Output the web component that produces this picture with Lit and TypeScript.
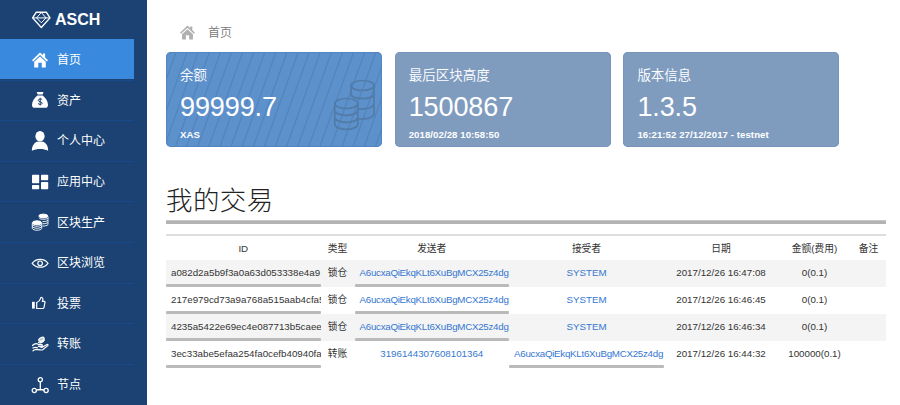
import { LitElement, html, svg, css } from "lit";
import { customElement, property } from "lit/decorators.js";
import { classMap } from "lit/directives/class-map.js";

const icons: Record<string, unknown> = {
  home: svg`<path fill="currentColor" d="M0 8.2 8 .6l2.8 2.6V1.5h2.3v3.9L16 8.2l-1.200 1.200L8 3 1.200 9.400z"/><path fill="currentColor" d="M2.200 9.800 8 4.400l5.800 5.400V15.500H9.800v-4.700H6.300v4.700H2.200z"/>`,
  money: svg`<path fill="currentColor" d="M4.700 0h6.800l-.9 2.500H5.700zM5.400 3.600h5.300c3 2.300 5.300 6 5.300 9.100 0 2-.8 3.100-2.500 3.100h-11C.8 15.800 0 14.700 0 12.700c0-3.100 2.400-6.800 5.400-9.100z"/><path d="M10.200 7.700C9.700 6.800 6.300 6.600 6.200 8.300c-.1 1.800 4.100 1.100 4 2.900-.1 1.600-3.600 1.500-4.200.2M8.200 5.800v7.700" fill="none" stroke="#1b4272" stroke-width="1"/>`,
  person: svg`<ellipse cx="8" cy="3.200" rx="4.600" ry="5.200" fill="currentColor"/><path fill="currentColor" d="M4.500 8.700h7c2.800 1.500 4.700 4.400 4.700 9-5-2.200-11.200-2.200-16.400 0C-.2 13.500 1.700 10.200 4.500 8.700z"/>`,
  apps: svg`<rect x="0" y=".7" width="7.200" height="8.500" rx=".7" fill="currentColor"/><rect x="9" y=".7" width="7.200" height="5.500" rx=".7" fill="currentColor"/><rect x="0" y="11" width="7.200" height="4.200" rx=".7" fill="currentColor"/><rect x="9" y="8" width="7.200" height="7.200" rx=".7" fill="currentColor"/>`,
  coins: svg`<g fill="none" stroke="currentColor" stroke-width=".9"><ellipse cx="11.300" cy="2" rx="4.500" ry="1.900" fill="currentColor"/><path d="M7 3.800c1 2 8 2 9 0M10.500 7.500c2 .3 5-.2 5.500-1.500M10.500 9.700c2 .2 5-.3 5.500-1.500M10.500 12c2 .2 5-.3 5.500-1.500M16 2.500v8"/><ellipse cx="5" cy="8.800" rx="4.600" ry="2" fill="currentColor"/><path d="M.3 10.500c.8 2.300 8.600 2.300 9.400 0M.3 12.500c.8 2.300 8.600 2.300 9.400 0M.3 14.500c.8 2.300 8.600 2.300 9.400 0M.3 9v5.500M9.700 9v5.500"/></g>`,
  eye: svg`<path d="M.2 8.300C4 3 12.500 3 16 8.300 12.500 13.500 4 13.500.2 8.300z" fill="none" stroke="currentColor" stroke-width="1.200"/><circle cx="8.100" cy="8.300" r="2.300" fill="none" stroke="currentColor" stroke-width="1.200"/>`,
  thumb: svg`<path fill="currentColor" d="M0 6.800h2.800v6.800H0z"/><path d="M4.700 7.500C6.500 6.800 8 5.500 8.600 3.300c.3-1.300 2.300-1 2.300.6 0 1-.2 1.800-.4 2.500h1.800c.6 0 .8.500.7 1l-1 5c-.2.800-.6 1.100-1.300 1.100H4.700z" fill="none" stroke="currentColor" stroke-width="1.200"/>`,
  transfer: svg`<g fill="none" stroke="currentColor" stroke-width="1.200" stroke-linecap="round" stroke-linejoin="round"><path d="M.5 9.500c2-2 4-2.200 5.700-1.200l3.500.4c1 .2.700 1.600-.2 1.600l-3.200-.1 3.500 1.200 5.200-2.900c1.200-.3 1.300.8.500 1.400l-4.800 3.800c-1.400.9-4.700-.3-6.500-.4-1.300 0-2.200.6-3.200 1.500"/><ellipse cx="9.400" cy="3.300" rx="2.900" ry="1.700" transform="rotate(-25 9.400 3.300)" fill="currentColor" fill-opacity=".7"/><path d="M6.500 6.500c1.500 1 5.200-.5 5.800-2.500M1 12c1.700-1 3-.7 4.500-.2"/></g>`,
  nodes: svg`<g fill="none" stroke="currentColor" stroke-width="1.300"><circle cx="8.300" cy="2.800" r="2.100"/><circle cx="2.300" cy="13.500" r="2.100"/><circle cx="14.100" cy="13.500" r="2.100"/><path d="M8.300 5v7.500M4.500 13l3.800-.5 3.700.5"/></g>`,
};

@customElement("side-item")
class SideItem extends LitElement {
  @property() icon = "";
  @property() label = "";
  @property({ type: Boolean }) active = false;
  static styles = css`
    :host { display: block; height: 40.6px; }
    .item { box-sizing: border-box; width: 133.5px; height: 100%; padding: 1px 0 0 32px; display: flex; align-items: center; color: #fff; border-top: 1px solid #164a8b; }
    .active { height: 40px; background: #398ade; border-color: #398ade; }
    svg { width: 17px; height: 17px; margin-right: 8px; overflow: visible; flex: none; }
    span { font: 400 12px/20px "Noto Sans CJK SC", sans-serif; white-space: nowrap; margin-bottom: 2px; }
  `;
  render() {
    return html`<div class=${classMap({ item: true, active: this.active })}>
      <svg viewBox="0 0 17 17">${icons[this.icon]}</svg><span>${this.label}</span>
    </div>`;
  }
}

@customElement("stat-card")
class StatCard extends LitElement {
  @property() label = "";
  @property() value = "";
  @property() note = "";
  @property({ type: Boolean }) primary = false;
  static styles = css`
    :host { display: block; }
    .card { box-sizing: border-box; position: relative; height: 95px; padding: 12px 14px 0; overflow: hidden; border-radius: 5px; color: #fff; background: #7f9cbf; box-shadow: inset 0 0 0 1px #7896bc; }
    .primary { background: #5d91cc; box-shadow: inset 0 0 0 1px #4f86c5; }
    .art { position: absolute; inset: 0; width: 100%; height: 100%; }
    .label, .value, .note { position: relative; white-space: nowrap; }
    .label { font: 350 13.5px/20px "Noto Sans CJK SC", sans-serif; }
    .value { font: 27px/32px "Liberation Sans", sans-serif; margin-top: 7px; letter-spacing: -.1px; }
    .note { font: 700 9.6px/14px "Liberation Sans", sans-serif; margin-top: 5px; letter-spacing: .08px; }
  `;
  render() {
    const stripes = Array.from({ length: 25 }, (_, i) => i * 11.1 - 35);
    return html`<div class=${classMap({ card: true, primary: this.primary })}>
      ${this.primary ? html`<svg class="art" viewBox="0 0 216 95">
        <g stroke="#5483ba" stroke-width="1.200">${stripes.map((x) => svg`<path d="M${x} 95 L${x + 34} 0"/>`)}</g>
        <g fill="none" stroke="#527ba8" stroke-width="1.700">
          <ellipse cx="196.500" cy="33.500" rx="11.500" ry="5"/>
          <path d="M185 33.500v11M208 33.500v28.500M185 42c1 6 22 6 23 0M191.500 56.800c6.500 1 15.500-.8 16.500-4.800M191.500 66.700c6.500 1 15.500-.2 16.500-4.700"/>
          <ellipse cx="180.300" cy="51.500" rx="11.500" ry="5"/>
          <path d="M168.800 51.500v21c1 6.500 22 6.500 23 0v-21M168.800 58.500c1 6.500 22 6.500 23 0M168.800 65.500c1 6.500 22 6.500 23 0"/>
        </g></svg>` : ""}
      <div class="label">${this.label}</div>
      <div class="value">${this.value}</div>
      <div class="note">${this.note}</div>
    </div>`;
  }
}

const SENDER = "A6ucxaQiEkqKLt6XuBgMCX25z4dg";
const rows = [
  { id: "a082d2a5b9f3a0a63d053338e4a9", type: "锁仓", from: SENDER, to: "SYSTEM", date: "2017/12/26 16:47:08", amount: "0(0.1)" },
  { id: "217e979cd73a9a768a515aab4cfa5", type: "锁仓", from: SENDER, to: "SYSTEM", date: "2017/12/26 16:46:45", amount: "0(0.1)" },
  { id: "4235a5422e69ec4e087713b5caee", type: "锁仓", from: SENDER, to: "SYSTEM", date: "2017/12/26 16:46:34", amount: "0(0.1)" },
  { id: "3ec33abe5efaa254fa0cefb40940fa", type: "转账", from: "3196144307608101364", to: SENDER, date: "2017/12/26 16:44:32", amount: "100000(0.1)" },
];

@customElement("trade-table")
class TradeTable extends LitElement {
  static styles = css`
    :host { display: block; border-top: 2px solid #ddd; font: 9.75px/14px "Liberation Sans", "Noto Sans CJK SC", sans-serif; color: #333; }
    .row { display: grid; grid-template-columns: 154.5px 34px 154.5px 155px 114px 73px 35px; height: 27px; }
    .head { height: 24px; }
    .row.odd { background: #f4f4f4; }
    .cell { box-sizing: border-box; min-width: 0; padding-top: 6px; text-align: center; white-space: nowrap; overflow: hidden; }
    .id { text-align: left; padding-left: 5px; }
    .link { color: #3477d1; }
    .address { text-align: left; padding-left: 5px; letter-spacing: -.27px; }
    .scroll { position: relative; }
    .scroll::after { content: ""; position: absolute; left: 0; right: 0; bottom: 0; height: 3px; border-radius: 1px; background: #bababa; }
  `;
  private address(text: string) {
    const long = text === SENDER;
    return html`<div class=${classMap({ cell: true, link: true, scroll: long, address: long })}>${text}</div>`;
  }
  render() {
    return html`
      <div class="row head">${["ID", "类型", "发送者", "接受者", "日期", "金额(费用)", "备注"].map((t) => html`<div class="cell">${t}</div>`)}</div>
      ${rows.map((r, i) => html`<div class=${classMap({ row: true, odd: i % 2 === 0 })}>
        <div class="cell id scroll">${r.id}</div>
        <div class="cell">${r.type}</div>
        ${this.address(r.from)}${this.address(r.to)}
        <div class="cell">${r.date}</div>
        <div class="cell">${r.amount}</div>
        <div class="cell"></div>
      </div>`)}`;
  }
}

@customElement("app-root")
class AppRoot extends LitElement {
  static styles = css`
    :host { display: flex; width: 900px; height: 405px; overflow: hidden; background: #fff; }
    .side { flex: none; width: 147px; background: #1b4272; }
    .brand { box-sizing: border-box; height: 39px; padding-left: 32px; display: flex; align-items: center; color: #fff; }
    .brand svg { width: 19px; height: 18px; margin-right: 4px; }
    .brand span { font: 700 16px/20px "Liberation Sans", sans-serif; }
    .main { flex: 1; min-width: 0; padding: 0 14px 0 19px; }
    .crumb { height: 52px; box-sizing: border-box; padding: 12px 0 0 14px; display: flex; align-items: center; color: #777; font: 350 12px/20px "Noto Sans CJK SC", sans-serif; }
    .crumb svg { width: 15px; height: 15px; margin-right: 13px; color: #b0b0b0; }
    .cards { display: grid; grid-template-columns: repeat(3, 216px); gap: 12.700px; }
    h1 { box-sizing: border-box; height: 73px; margin: 0; padding-top: 32px; color: #222; font: 250 26.500px/40px "Noto Sans CJK SC", sans-serif; letter-spacing: .4px; }
    .rule { height: 3.500px; margin-bottom: 10.500px; background: linear-gradient(#c6c6c6 1px, #b3b3b3 1px); }
  `;
  render() {
    const items = [["home", "首页"], ["money", "资产"], ["person", "个人中心"], ["apps", "应用中心"], ["coins", "区块生产"], ["eye", "区块浏览"], ["thumb", "投票"], ["transfer", "转账"], ["nodes", "节点"]];
    return html`
      <nav class="side">
        <div class="brand">
          <svg viewBox="0 0 19 18" fill="none" stroke="#fff" stroke-width="1.400" stroke-linejoin="round"><path d="M4.300 1.200h10L18 6.900 9.300 16.500.6 6.900z"/><path stroke-width="1" d="M.8 6.900H17.800M9.300 1.400 4.600 6.900l4.700 4.900L14 6.900z"/></svg>
          <span>ASCH</span>
        </div>
        ${items.map(([icon, label], i) => html`<side-item icon=${icon} label=${label} ?active=${i === 0}></side-item>`)}
      </nav>
      <main class="main">
        <div class="crumb"><svg viewBox="0 0 16 16">${icons.home}</svg>首页</div>
        <div class="cards">
          <stat-card primary label="余额" value="99999.7" note="XAS"></stat-card>
          <stat-card label="最后区块高度" value="1500867" note="2018/02/28 10:58:50"></stat-card>
          <stat-card label="版本信息" value="1.3.5" note="16:21:52 27/12/2017 - testnet"></stat-card>
        </div>
        <h1>我的交易</h1>
        <div class="rule"></div>
        <trade-table></trade-table>
      </main>`;
  }
}
